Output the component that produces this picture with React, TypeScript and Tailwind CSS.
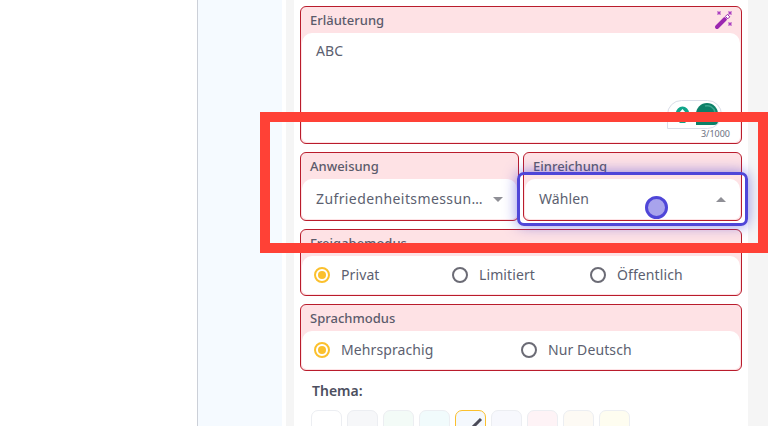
import type { ReactNode } from "react";

const font = "font-['Noto_Sans','Open_Sans',sans-serif]";

function Card({ label, children, className = "" }: { label: string; children: ReactNode; className?: string }) {
  return (
    <div className={`flex shrink-0 flex-col rounded-md border border-[#b91c2c] bg-[#fee2e5] p-px ${className}`}>
      <div className="h-[25px] shrink-0 pl-[8px] pt-[3px] text-[13px] leading-[18px] font-medium text-[#5b5b6b]">{label}</div>
      <div className="flex min-h-0 flex-1 items-center rounded-t-[10px] rounded-b-[5px] bg-white">{children}</div>
    </div>
  );
}

function Radio({ label, checked, width }: { label: string; checked?: boolean; width: string }) {
  return (
    <div className={`flex items-center gap-[11px] ${width}`}>
      {checked ? (
        <span className="flex h-[16px] w-[16px] items-center justify-center rounded-full border-2 border-[#fbc02d]">
          <span className="h-[8px] w-[8px] rounded-full bg-[#fbc02d]" />
        </span>
      ) : (
        <span className="h-[16px] w-[16px] rounded-full border-2 border-[#6b6b75]" />
      )}
      <span className="text-[14px] leading-[20px] tracking-[0.1px] text-[#5c5f70]">{label}</span>
    </div>
  );
}

function Caret({ up }: { up?: boolean }) {
  return (
    <svg width="10" height="5" viewBox="0 0 10 5" className="shrink-0">
      <path d={up ? "M0 5 L5 0 L10 5 Z" : "M0 0 L5 5 L10 0 Z"} fill="#8f8f96" />
    </svg>
  );
}

function Wand() {
  return (
    <svg width="20" height="20" viewBox="0 0 20 20" className="absolute right-[8px] top-[4px]">
      <path d="M3 17 L11 9" stroke="#9c27b0" strokeWidth="4" strokeLinecap="round" />
      <path d="M12 8 L14 6" stroke="#fff" strokeWidth="3" />
      <path d="M11.4 6.4 L13.4 4.4 L15.8 6.8 L13.8 8.8 Z" fill="#fff" stroke="#9c27b0" strokeWidth="1" />
      <path d="M3.5 1.5 L6.5 4.5 M6.5 1.5 L3.5 4.5 M14.5 1.5 L17.5 4.5 M17.5 1.5 L14.5 4.5 M14.5 12.5 L17.5 15.5 M17.5 12.5 L14.5 15.5" stroke="#a93cc0" strokeWidth="1.3" />
    </svg>
  );
}

const swatches = ["bg-white", "bg-[#f6f7f9]", "bg-[#f3fbf7]", "bg-[#f1fbfc]", "bg-[#f4f8fd]", "bg-[#f7f8fd]", "bg-[#fef3f6]", "bg-[#fdfaf4]", "bg-[#fefdf0]"];

export default function App() {
  return (
    <div className={`relative flex h-[426px] w-[768px] overflow-hidden bg-white ${font}`}>
      <div className="w-[197px] shrink-0 bg-white" />
      <div className="w-[85px] shrink-0 border-l border-[#ccd0d8] bg-[#f5faff]" />
      <div className="w-[4px] shrink-0 bg-white" />
      <div className="flex flex-1 bg-[#f5f5f5] pl-[8px]">
        <div className="flex w-[454px] shrink-0 flex-col gap-[8px] bg-white px-[6px] pt-[6px]">
          <div className="relative shrink-0">
            <Card label="Erläuterung" className="h-[138px]">
              <div className="h-full w-full px-[14px] pt-[8px] text-[14px] leading-[20px] tracking-[0.1px] text-[#5c5f70]">ABC</div>
            </Card>
            <Wand />
            <div className="absolute left-[367px] top-[94px] h-[29px] w-[55px] rounded-[18px] rounded-bl-none border border-[#d9dde8] bg-white">
              <svg width="53" height="27" viewBox="0 0 53 27">
                <path d="M8 12 A6.5 6.5 0 1 1 21 12 C21 15 18 15 17.5 17 L17.5 22 L11.5 22 L11.5 17 C11 15 8 15 8 12 Z" fill="#10a58a" />
                <path d="M14.5 8 L10.5 12.5 L18.5 12.5 Z" fill="#fff" />
                <path d="M28 24 L28 13 A11 11 0 0 1 50 13 L50 20 Q50 24 46 24 Z" fill="#0c8068" />
                <path d="M37 5 A8 8 0 0 1 47 11" stroke="#3aa58e" strokeWidth="1.5" fill="none" />
              </svg>
            </div>
            <div className="absolute right-[12px] top-[122px] text-[9px] leading-[12px] text-[#6b7080]">3/1000</div>
          </div>
          <div className="flex shrink-0 gap-[4px]">
            <Card label="Anweisung" className="h-[69px] flex-1">
              <div className="flex w-full items-center justify-between px-[14px]">
                <span className="text-[14px] leading-[20px] tracking-[0.4px] text-[#5c5f70]">Zufriedenheitsmessun…</span>
                <Caret />
              </div>
            </Card>
            <Card label="Einreichung" className="h-[69px] flex-1">
              <div className="flex w-full items-center justify-between px-[14px]">
                <span className="text-[14px] leading-[20px] tracking-[0.1px] text-[#5c5f70]">Wählen</span>
                <Caret up />
              </div>
            </Card>
          </div>
          <Card label="Freigabemodus" className="h-[67px]">
            <div className="flex w-full items-center pl-[12px]">
              <Radio label="Privat" checked width="w-[138px]" />
              <Radio label="Limitiert" width="w-[138px]" />
              <Radio label="Öffentlich" width="w-[138px]" />
            </div>
          </Card>
          <Card label="Sprachmodus" className="h-[67px]">
            <div className="flex w-full items-center pl-[12px]">
              <Radio label="Mehrsprachig" checked width="w-[207px]" />
              <Radio label="Nur Deutsch" width="w-[138px]" />
            </div>
          </Card>
          <div className="shrink-0 pl-[12px] pt-[2px]">
            <div className="text-[14px] leading-[20px] font-semibold text-[#4c4f60]">Thema:</div>
            <div className="-ml-px mt-[9px] flex gap-[5px]">
              {swatches.map((color, i) => (
                <div key={i} className={`relative h-[32px] w-[31px] rounded-[7px] border-[1.5px] ${i === 4 ? "border-[#fbc02d]" : "border-[#eceef2]"} ${color}`}>
                  {i === 4 && (
                    <svg width="14" height="14" viewBox="0 0 14 14" className="absolute left-[14px] top-[5px]">
                      <path d="M1 13 L11 3" stroke="#4a4a58" strokeWidth="3" />
                    </svg>
                  )}
                </div>
              ))}
            </div>
          </div>
        </div>
      </div>
      {/* annotation overlays */}
      <div className="absolute left-[517px] top-[172px] h-[54px] w-[231px] rounded-[7px] border-[3px] border-[#4f46d8] shadow-[0_0_14px_rgba(79,70,216,0.6)]" />
      <div className="absolute left-[645px] top-[196px] h-[23px] w-[23px] rounded-full border-[3px] border-[#4f46d8] bg-[#a8a3ec]" />
      <div className="absolute left-[260px] top-[112px] h-[141px] w-[508px] border-[10px] border-[#ff4136]" />
    </div>
  );
}
